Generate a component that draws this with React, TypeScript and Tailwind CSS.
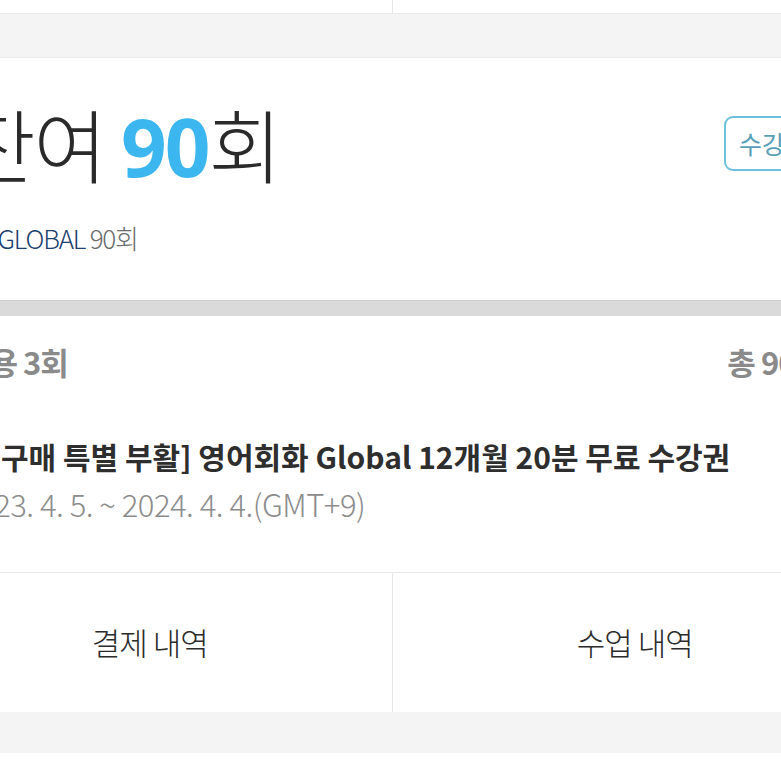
import React from 'react'

const kr = { fontFamily: '"Noto Sans CJK KR", "Noto Sans", sans-serif' }

function TabPair({ left, right, className }: { left: string; right: string; className: string }) {
  return (
    <div className={`grid grid-cols-2 bg-white ${className}`}>
      <div className="flex items-center justify-center border-r border-[#e6e6e6] text-[31px] font-light text-[#2b2b2b] tracking-[-1px]">
        {left}
      </div>
      <div className="flex items-center justify-center text-[31px] font-light text-[#2b2b2b] tracking-[-1px]">
        {right}
      </div>
    </div>
  )
}

export default function App() {
  return (
    <div className="h-[781px] w-[781px] overflow-hidden bg-white" style={kr}>
      <div className="ml-[-92px] w-[969px]">
        {/* tail of the previous tab row */}
        <TabPair left="" right="" className="h-[14px] border-b border-[#e8e8e8]" />

        <div className="h-[43px] bg-[#f4f4f4]" />

        {/* remaining lessons card */}
        <div className="h-[243px] border-t border-[#ececec] bg-white px-[54px] pt-[44px]">
          <div className="flex items-start justify-between">
            <p className="text-[80px] font-light leading-none tracking-[-2px] text-[#2a2a2a]">
              잔여{' '}
              <span className="font-bold text-[#3cb6ee]" style={{ fontFamily: '"Noto Sans", sans-serif' }}>
                90
              </span>
              회
            </p>
            <span className="mt-[14px] rounded-[9px] border-2 border-[#6cc0dc] px-[13px] py-[13px] text-[25px] leading-none text-[#5a9fb8]">
              수강권
            </span>
          </div>
          <p className="mt-[39px] text-[26px] font-light leading-none tracking-[-1.2px]">
            <span className="text-[#1d3e6e]">EN GLOBAL</span>{' '}
            <span className="text-[#6a6a6a]">90회</span>
          </p>
        </div>

        <div className="h-[16px] border-t border-[#cfcfcf] bg-[#dadada]" />

        {/* usage and ticket */}
        <div className="h-[257px] border-b border-[#e8e8e8] bg-white px-[54px] pt-[30px]">
          <div className="flex justify-between text-[31px] font-bold leading-none tracking-[-1px] text-[#8a8a8a]">
            <span>이용 3회</span>
            <span>총 90회</span>
          </div>
          <p className="mt-[64px] text-[30px] font-bold leading-none tracking-normal text-[#2e2e2e]">
            [재구매 특별 부활] 영어회화 Global 12개월 20분 무료 수강권
          </p>
          <p className="mt-[17px] text-[31px] font-light leading-none tracking-[-0.5px] text-[#8c8c8c]">
            2023. 4. 5. ~ 2024. 4. 4.(GMT+9)
          </p>
        </div>

        <TabPair left="결제 내역" right="수업 내역" className="h-[139px]" />

        <div className="h-[41px] bg-[#f4f4f4]" />
        <div className="h-[40px] bg-white" />
      </div>
    </div>
  )
}
